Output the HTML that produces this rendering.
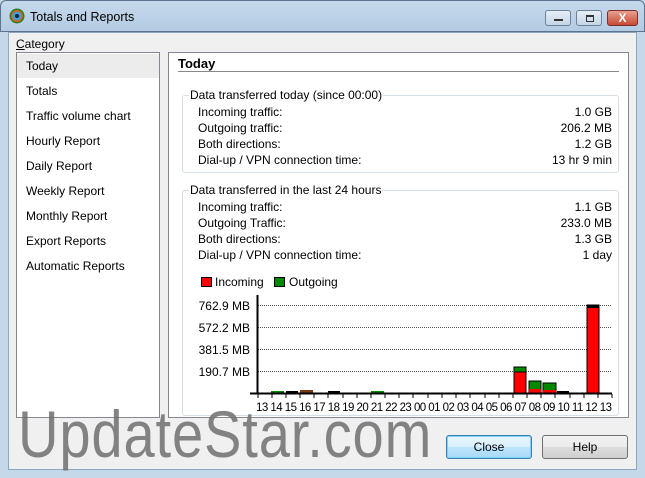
<!DOCTYPE html>
<html><head><style>
*{margin:0;padding:0;box-sizing:border-box}
body{width:645px;height:478px;overflow:hidden;background:#c4d8ea;font-family:"Liberation Sans",sans-serif;font-size:12px;color:#000;position:relative}
.a{position:absolute;white-space:nowrap}
#title{left:0;top:0;width:645px;height:32px;background:linear-gradient(#c6d9ec,#b3cbe3);border-radius:6px 6px 0 0;border:1px solid #5b7591}
#client{left:8px;top:32px;width:629px;height:438px;background:#f0f0f0;border:1px solid #8ea6bf}
.btn{border:1px solid #707070;border-radius:3px;background:linear-gradient(#f2f2f2 0,#ebebeb 50%,#dddddd 51%,#cfcfcf);text-align:center;line-height:22px;font-size:12px}
.r{position:absolute;right:0}
</style></head><body>
<div class="a" id="title"></div>
<svg class="a" style="left:9px;top:8px" width="16" height="16"><circle cx="8" cy="8" r="7.5" fill="#2a7f2a"/><circle cx="8" cy="8" r="6" fill="#e06010"/><circle cx="8" cy="8" r="4.5" fill="#3aa0e0"/><circle cx="8" cy="8" r="2" fill="#123"/></svg>
<div class="a" style="left:30px;top:10px;font-size:12.5px">Totals and Reports</div>
<div class="a" style="left:545px;top:10px;width:26px;height:16px;border:1px solid #6d819a;border-radius:3px;background:linear-gradient(#e6eef7,#c5d5e6)"><div style="position:absolute;left:8px;top:8px;width:9px;height:2px;background:#333"></div></div>
<div class="a" style="left:576px;top:10px;width:26px;height:16px;border:1px solid #6d819a;border-radius:3px;background:linear-gradient(#e6eef7,#c5d5e6)"><div style="position:absolute;left:9px;top:4px;width:8px;height:7px;border:1px solid #333;border-top-width:2px"></div></div>
<div class="a" style="left:607px;top:10px;width:31px;height:16px;border:1px solid #7a2f2a;border-radius:3px;background:linear-gradient(#e8a090,#c84a33);color:#fff;font-weight:bold;text-align:center;line-height:14px;font-size:12px">X</div>
<div class="a" id="client"></div>
<div class="a" style="left:16px;top:37px"><u>C</u>ategory</div>
<div class="a" style="left:16px;top:52px;width:144px;height:366px;background:#fff;border:1px solid #828790"></div>
<div class="a" style="left:17px;top:54px;width:142px;height:24px;background:#ececec"></div>
<div class="a" style="left:26px;top:54px;line-height:25px">Today<br>Totals<br>Traffic volume chart<br>Hourly Report<br>Daily Report<br>Weekly Report<br>Monthly Report<br>Export Reports<br>Automatic Reports</div>
<div class="a" style="left:168px;top:52px;width:461px;height:366px;background:#fff;border:1px solid #828790"></div>
<div class="a" style="left:178px;top:56px;font-weight:bold;font-size:13px">Today</div>
<div class="a" style="left:178px;top:71px;width:441px;height:1px;background:#888"></div>
<div class="a" style="left:182px;top:95px;width:437px;height:78px;border:1px solid #d5dfe5;border-radius:3px"></div>
<div class="a" style="left:189px;top:88px;background:#fff;padding:0 1px">Data transferred today (since 00:00)</div>
<div class="a" style="left:198px;top:104px;width:414px;line-height:16px">
<div style="position:relative">Incoming traffic:<span class="r">1.0 GB</span></div>
<div style="position:relative">Outgoing traffic:<span class="r">206.2 MB</span></div>
<div style="position:relative">Both directions:<span class="r">1.2 GB</span></div>
<div style="position:relative">Dial-up / VPN connection time:<span class="r">13 hr 9 min</span></div></div>
<div class="a" style="left:182px;top:190px;width:437px;height:226px;border:1px solid #d5dfe5;border-radius:3px"></div>
<div class="a" style="left:189px;top:183px;background:#fff;padding:0 1px">Data transferred in the last 24 hours</div>
<div class="a" style="left:198px;top:199px;width:414px;line-height:16px">
<div style="position:relative">Incoming traffic:<span class="r">1.1 GB</span></div>
<div style="position:relative">Outgoing Traffic:<span class="r">233.0 MB</span></div>
<div style="position:relative">Both directions:<span class="r">1.3 GB</span></div>
<div style="position:relative">Dial-up / VPN connection time:<span class="r">1 day</span></div></div>
<svg class="a" style="left:0;top:0" width="645" height="478" font-family="Liberation Sans" font-size="12">
<rect x="201.5" y="277.5" width="10" height="9" fill="#f00" stroke="#000"/><text x="215" y="286">Incoming</text>
<rect x="274.5" y="277.5" width="10" height="9" fill="#080" stroke="#000"/><text x="289" y="286">Outgoing</text>
<g stroke="#555" stroke-dasharray="1,1"><line x1="258" y1="305.5" x2="612" y2="305.5"/><line x1="258" y1="327.5" x2="612" y2="327.5"/><line x1="258" y1="349.5" x2="612" y2="349.5"/><line x1="258" y1="371.5" x2="612" y2="371.5"/></g>
<g text-anchor="end"><text x="250" y="310">762.9 MB</text><text x="250" y="332">572.2 MB</text><text x="250" y="354">381.5 MB</text><text x="250" y="376">190.7 MB</text></g>
<rect x="514" y="367" width="12" height="26" fill="#f00" stroke="#000"/><rect x="514" y="367" width="12" height="5" fill="#080" stroke="#000"/>
<rect x="529" y="381" width="12" height="12" fill="#080" stroke="#000"/><rect x="529" y="389" width="12" height="4" fill="#f00"/>
<rect x="543" y="383" width="13" height="10" fill="#080" stroke="#000"/><rect x="543" y="390" width="13" height="3" fill="#f00"/>
<rect x="587" y="305" width="12" height="88" fill="#f00" stroke="#000"/><rect x="587" y="305" width="12" height="3" fill="#000"/>
<rect x="271" y="391" width="13" height="2" fill="#080"/><rect x="286" y="391" width="12" height="2" fill="#000"/><rect x="300" y="390" width="13" height="3" fill="#7a3a10"/><rect x="328" y="391" width="12" height="2" fill="#000"/><rect x="371" y="391" width="13" height="2" fill="#080"/><rect x="557" y="391" width="12" height="2" fill="#000"/>
<line x1="257.5" y1="295" x2="257.5" y2="394" stroke="#000" stroke-width="2"/>
<line x1="250" y1="393.5" x2="612" y2="393.5" stroke="#000" stroke-width="2"/>
<path d="M258 394v4M272 394v4M286 394v4M300 394v4M314 394v4M328 394v4M343 394v4M357 394v4M371 394v4M385 394v4M399 394v4M413 394v4M428 394v4M442 394v4M456 394v4M470 394v4M485 394v4M499 394v4M513 394v4M527 394v4M541 394v4M555 394v4M570 394v4M584 394v4M598 394v4M612 394v4" stroke="#000"/>
<text x="256" y="411" font-size="11.5" textLength="356" lengthAdjust="spacing">13 14 15 16 17 18 19 20 21 22 23 00 01 02 03 04 05 06 07 08 09 10 11 12 13</text>
</svg>
<div class="a" style="left:18px;top:396px;font-size:66px;color:rgba(110,110,110,0.85);transform:scaleX(0.85);transform-origin:0 0;letter-spacing:1px">UpdateStar.com</div>
<div class="a btn" style="left:446px;top:435px;width:86px;height:24px;border-color:#3c7fb1;background:linear-gradient(#eaf6fd,#d9f0fc 50%,#bee6fd 51%,#a7d9f5);box-shadow:inset 0 0 0 1px #7fd2f5">Close</div>
<div class="a btn" style="left:542px;top:435px;width:86px;height:24px">Help</div>
</body></html>
